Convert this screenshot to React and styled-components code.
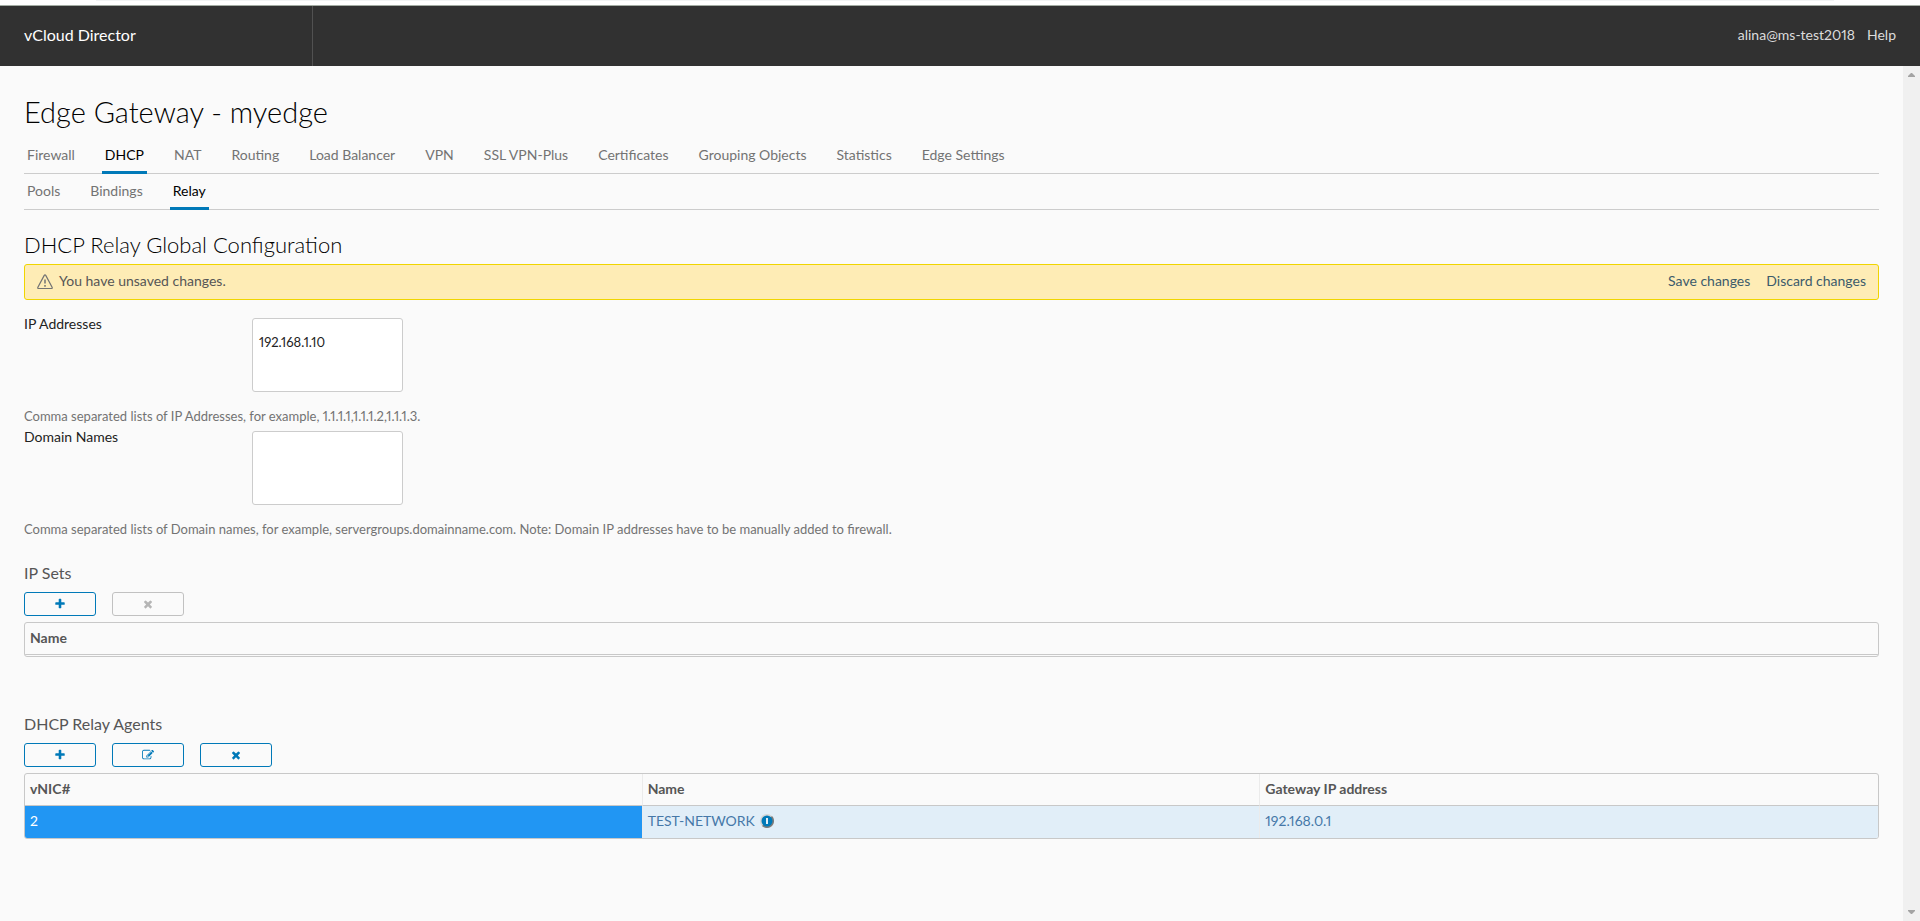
import { useState } from "react"
import styled, { createGlobalStyle } from "styled-components"

const azul = "#0079b8"
const borde = "#c8c8c8"

const GlobalStyle = createGlobalStyle`
  * {
    box-sizing:border-box;
  }
  body {
    margin:0;
    background-color:#fafafa;
    color:#565656;
    font-family:Lato, "Open Sans", sans-serif;
    font-size:14px;
    font-variant-numeric:proportional-nums;
    line-height:24px;
  }
  button, textarea {
    font-family:inherit;
    font-variant-numeric:inherit;
  }
`
const Page = styled.div`
  display:flex;
  flex-direction:column;
  min-height:100vh;
`
const BrowserEdge = styled.div`
  height:6px;
  padding:0 86px 0 96px;
  background-color:#fff;
  border-bottom:1px solid #a3aca3;
  &::before {
    content:"";
    display:block;
    height:1px;
    background-color:#f1f3f4;
  }
`
const Header = styled.header`
  display:flex;
  justify-content:space-between;
  height:60px;
  line-height:58px;
  background-color:#313131;
`
const Brand = styled.div`
  width:313px;
  padding-left:24px;
  border-right:1px solid #515151;
  color:#fff;
  font-size:16px;
`
const HeaderLinks = styled.nav`
  display:flex;
  gap:12px;
  padding-right:24px;
  a {
    color:#dcdcdc;
    text-decoration:none;
  }
`
const Body = styled.div`
  display:flex;
  flex:1;
`
const Content = styled.main`
  flex:1;
  min-width:0;
  padding:24px 24px 0;
`
const ScrollTrack = styled.div`
  display:flex;
  flex-direction:column;
  justify-content:space-between;
  align-items:center;
  width:17px;
  padding:7px 0;
  background-color:#f0f0f0;
`
const Arrow = styled.svg`
  display:block;
  width:7px;
  height:4px;
  fill:#a3a3a3;
`
const Title = styled.h1`
  margin:0 0 4px;
  color:#000;
  font-size:29px;
  font-weight:300;
  line-height:44px;
`
const Tabs = styled.nav`
  display:flex;
  gap:24px;
  height:36px;
  border-bottom:1px solid #ccc;
`
const Tab = styled.button`
  height:36px;
  padding:0 3px;
  border:0;
  border-bottom:3px solid ${({ $active }) => $active ? azul : "transparent"};
  background:none;
  color:${({ $active }) => $active ? "#000" : "#737373"};
  font-size:14px;
  line-height:33px;
`
const SectionTitle = styled.h2`
  margin:24px 0 8px;
  color:#000;
  font-size:22px;
  font-weight:300;
  line-height:22px;
`
const Alert = styled.div`
  display:flex;
  align-items:center;
  gap:6px;
  height:36px;
  padding:0 12px;
  border:1px solid #f0d500;
  border-radius:3px;
  background-color:#feecb5;
`
const WarningIcon = styled.svg`
  width:16px;
  height:16px;
  fill:none;
  stroke:#737373;
`
const AlertText = styled.span`
  line-height:22px;
  padding-bottom:2px;
`
const AlertActions = styled.div`
  display:flex;
  gap:16px;
  margin-left:auto;
  padding-bottom:2px;
`
const AlertButton = styled.button`
  padding:0;
  border:0;
  background:none;
  color:#3c5b6b;
  font-size:14px;
  line-height:22px;
`
const Form = styled.form`
  padding-top:18px;
`
const Field = styled.div`
  display:flex;
  align-items:flex-start;
`
const Label = styled.label`
  width:228px;
  color:#222;
  font-size:14px;
  line-height:12px;
`
const TextArea = styled.textarea`
  display:block;
  width:151px;
  height:74px;
  padding:12px 6px;
  border:1px solid #ccc;
  border-radius:3px;
  background-color:#fff;
  color:#222;
  font-size:13px;
  line-height:22px;
  resize:none;
`
const Help = styled.p`
  margin:12px 0 3px;
  color:#737373;
  font-size:13px;
`
const Block = styled.section`
  padding-top:17px;
  margin-bottom:38px;
`
const BlockTitle = styled.h3`
  margin:0 0 7px;
  font-size:16px;
  font-weight:400;
  line-height:24px;
`
const Toolbar = styled.div`
  display:flex;
  gap:16px;
  margin-bottom:6px;
`
const ToolButton = styled.button`
  display:flex;
  align-items:center;
  justify-content:center;
  width:72px;
  height:24px;
  padding:0;
  border:1px solid ${azul};
  border-radius:3px;
  background:none;
  color:${azul};
  &:disabled {
    border-color:#c1c1c1;
    color:#b5b5b5;
  }
  svg {
    width:12px;
    height:12px;
    fill:currentColor;
  }
`
const Grid = styled.div`
  padding-bottom:${({ $empty }) => $empty ? "1px" : "0"};
  border:1px solid ${borde};
  border-radius:3px;
  overflow:hidden;
`
const Table = styled.table`
  width:100%;
  table-layout:fixed;
  border-collapse:separate;
  border-spacing:0;
  text-align:left;
  th, td {
    height:32px;
    padding:0 5px 2px;
    border-right:1px solid #ebebeb;
    line-height:24px;
  }
  th:last-child, td:last-child {
    border-right:0;
  }
`
const Th = styled.th`
  && {
    border-bottom:1px solid ${borde};
  }
  font-weight:700;
`
const Td = styled.td`
  background-color:${({ $selected }) => $selected ? "#2196f3" : "#e1eef8"};
  color:${({ $selected }) => $selected ? "#fff" : "#4678a8"};
`
const CellContent = styled.div`
  display:flex;
  align-items:center;
  gap:5px;
`
const InfoButton = styled.button`
  width:14px;
  height:14px;
  padding:0;
  border:0;
  background:none;
  svg {
    display:block;
  }
`

const icons = {
  plus: "M1600 736v192q0 40-28 68t-68 28h-416v416q0 40-28 68t-68 28h-192q-40 0-68-28t-28-68v-416h-416q-40 0-68-28t-28-68v-192q0-40 28-68t68-28h416v-416q0-40 28-68t68-28h192q40 0 68 28t28 68v416h416q40 0 68 28t28 68z",
  times: "M1490 1322q0 40-28 68l-136 136q-28 28-68 28t-68-28l-294-294-294 294q-28 28-68 28t-68-28l-136-136q-28-28-28-68t28-68l294-294-294-294q-28-28-28-68t28-68l136-136q28-28 68-28t68 28l294 294 294-294q28-28 68-28t68 28l136 136q28 28 28 68t-28 68l-294 294 294 294q28 28 28 68z",
  edit: "M888 1184l116-116-152-152-116 116v56h96v96h56zm440-720q-16-16-33 1l-350 350q-17 17-1 33t33-1l350-350q17-17 1-33zm80 594v190q0 119-84.5 203.5t-203.5 84.5h-832q-119 0-203.5-84.5t-84.5-203.5v-832q0-119 84.5-203.5t203.5-84.5h832q63 0 117 25 15 7 18 23 3 17-9 29l-49 49q-14 14-32 8-23-6-45-6h-832q-66 0-113 47t-47 113v832q0 66 47 113t113 47h832q66 0 113-47t47-113v-126q0-13 9-22l64-64q15-15 35-7t20 29zm-96-738l288 288-672 672h-288v-288zm444 132l-92 92-288-288 92-92q28-28 68-28t68 28l152 152q28 28 28 68t-28 68z",
}

const Icon = ({ name }) => <svg viewBox="0 0 1792 1792" aria-hidden="true"><path d={icons[name]} /></svg>

const mainTabs = ["Firewall", "DHCP", "NAT", "Routing", "Load Balancer", "VPN", "SSL VPN-Plus", "Certificates", "Grouping Objects", "Statistics", "Edge Settings"]
const dhcpTabs = ["Pools", "Bindings", "Relay"]
const agents = [{ vnic: "2", name: "TEST-NETWORK", gateway: "192.168.0.1" }]

const TabBar = ({ items, active, onSelect }) => {
  return <Tabs>
    {items.map((item) => <Tab key={item} type="button" $active={item === active} onClick={() => onSelect(item)}>{item}</Tab>)}
  </Tabs>
}

const App = () => {
  const [mainTab, setMainTab] = useState("DHCP")
  const [dhcpTab, setDhcpTab] = useState("Relay")

  return <Page>
    <GlobalStyle />
    <BrowserEdge />
    <Header>
      <Brand>vCloud Director</Brand>
      <HeaderLinks>
        <a href="#user">alina@ms-test2018</a>
        <a href="#help">Help</a>
      </HeaderLinks>
    </Header>
    <Body>
      <Content>
        <Title>Edge Gateway - myedge</Title>
        <TabBar items={mainTabs} active={mainTab} onSelect={setMainTab} />
        <TabBar items={dhcpTabs} active={dhcpTab} onSelect={setDhcpTab} />

        <SectionTitle>DHCP Relay Global Configuration</SectionTitle>
        <Alert>
          <WarningIcon viewBox="0 0 16 16" aria-hidden="true">
            <path d="M7.1 1.6 .9 13.3Q.4 14.5 1.6 14.5H14.4Q15.6 14.5 15.1 13.3L8.9 1.6Q8 .3 7.1 1.6Z" strokeWidth="1.2" />
            <path d="M8 5.5V9.5M8 11V12.7" strokeWidth="1.5" />
          </WarningIcon>
          <AlertText>You have unsaved changes.</AlertText>
          <AlertActions>
            <AlertButton type="button">Save changes</AlertButton>
            <AlertButton type="button">Discard changes</AlertButton>
          </AlertActions>
        </Alert>

        <Form>
          <Field>
            <Label htmlFor="ip-addresses">IP Addresses</Label>
            <TextArea id="ip-addresses" defaultValue="192.168.1.10" />
          </Field>
          <Help>Comma separated lists of IP Addresses, for example, 1.1.1.1,1.1.1.2,1.1.1.3.</Help>
          <Field>
            <Label htmlFor="domain-names">Domain Names</Label>
            <TextArea id="domain-names" />
          </Field>
          <Help>Comma separated lists of Domain names, for example, servergroups.domainname.com. Note: Domain IP addresses have to be manually added to firewall.</Help>
        </Form>

        <Block>
          <BlockTitle>IP Sets</BlockTitle>
          <Toolbar>
            <ToolButton type="button" aria-label="Add IP set"><Icon name="plus" /></ToolButton>
            <ToolButton type="button" aria-label="Remove IP set" disabled><Icon name="times" /></ToolButton>
          </Toolbar>
          <Grid $empty>
            <Table>
              <thead>
                <tr><Th>Name</Th></tr>
              </thead>
            </Table>
          </Grid>
        </Block>

        <Block>
          <BlockTitle>DHCP Relay Agents</BlockTitle>
          <Toolbar>
            <ToolButton type="button" aria-label="Add agent"><Icon name="plus" /></ToolButton>
            <ToolButton type="button" aria-label="Edit agent"><Icon name="edit" /></ToolButton>
            <ToolButton type="button" aria-label="Remove agent"><Icon name="times" /></ToolButton>
          </Toolbar>
          <Grid>
            <Table>
              <thead>
                <tr>
                  <Th>vNIC#</Th>
                  <Th>Name</Th>
                  <Th>Gateway IP address</Th>
                </tr>
              </thead>
              <tbody>
                {agents.map((agent) => <tr key={agent.vnic}>
                  <Td $selected>{agent.vnic}</Td>
                  <Td>
                    <CellContent>
                      {agent.name}
                      <InfoButton type="button" aria-label="Network details">
                        <svg width="14" height="14" viewBox="0 0 14 14">
                          <circle cx="7" cy="7" r="7" fill="#d5d5d5" />
                          <path d="M12 2A7 7 0 0 1 2 12Z" fill="#7b7b7b" />
                          <circle cx="7" cy="7" r="5.5" fill={azul} />
                          <path d="M7 4V10" stroke="#e1eef8" strokeWidth="2" />
                        </svg>
                      </InfoButton>
                    </CellContent>
                  </Td>
                  <Td>{agent.gateway}</Td>
                </tr>)}
              </tbody>
            </Table>
          </Grid>
        </Block>
      </Content>
      <ScrollTrack>
        <Arrow viewBox="0 0 7 4"><path d="M3 0H4L7 3V4H0V3Z" /></Arrow>
        <Arrow viewBox="0 0 7 4"><path d="M0 0H7V1L4 4H3L0 1Z" /></Arrow>
      </ScrollTrack>
    </Body>
  </Page>
}

export default App
